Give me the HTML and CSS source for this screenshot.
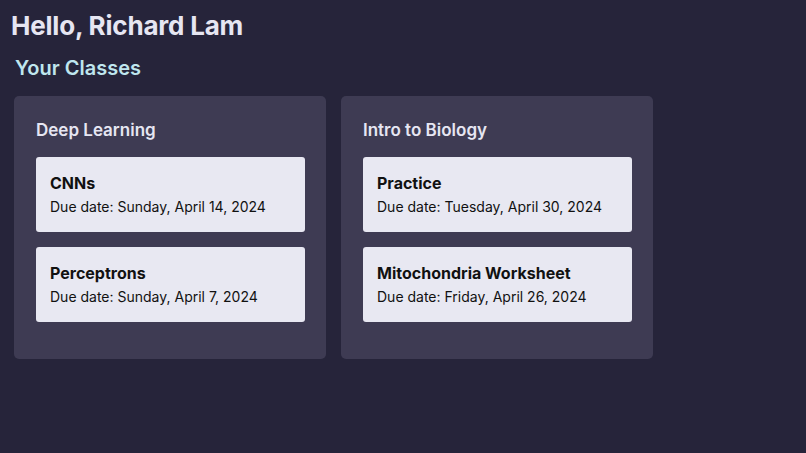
FILE: index.html
```html
<!DOCTYPE html>
<html lang="en">
<head>
  <meta charset="UTF-8">
  <meta name="viewport" content="width=device-width, initial-scale=1.0">
  <title>Dashboard</title>
  <link rel="stylesheet" href="styles.css">
</head>
<body>

<h1 class="greeting">Hello, Richard Lam</h1>
<h2 class="section-title">Your Classes</h2>

<div class="classes">
  <div class="class-card">
    <h3 class="class-name">Deep Learning</h3>
    <div class="assignment">
      <div class="assignment-name">CNNs</div>
      <div class="assignment-due">Due date: Sunday, April 14, 2024</div>
    </div>
    <div class="assignment">
      <div class="assignment-name">Perceptrons</div>
      <div class="assignment-due">Due date: Sunday, April 7, 2024</div>
    </div>
  </div>

  <div class="class-card">
    <h3 class="class-name">Intro to Biology</h3>
    <div class="assignment">
      <div class="assignment-name">Practice</div>
      <div class="assignment-due">Due date: Tuesday, April 30, 2024</div>
    </div>
    <div class="assignment">
      <div class="assignment-name">Mitochondria Worksheet</div>
      <div class="assignment-due">Due date: Friday, April 26, 2024</div>
    </div>
  </div>
</div>

</body>
</html>
```

FILE: styles.css
```css
body {
  font-family: Inter, "Noto Sans", sans-serif;
  background-color: #26243a;
  margin: 0;
  padding: 10px 11px;
  color: #e6e6f2;
}
.greeting {
  font-size: 26px;
  font-weight: 700;
  line-height: 32px;
  margin: 0;
  letter-spacing: -0.2px;
}
.section-title {
  font-size: 20px;
  font-weight: 600;
  line-height: 24px;
  color: #bfe6ee;
  margin: 14px 0 0 4px;
}
.classes {
  display: flex;
  gap: 15px;
  margin: 16px 0 0 3px;
}
.class-card {
  width: 312px;
  box-sizing: border-box;
  background: #3e3b53;
  border-radius: 5px;
  padding: 23px 21px 37px 22px;
  display: flex;
  flex-direction: column;
  gap: 15px;
}
.class-name {
  font-size: 17px;
  font-weight: 600;
  line-height: 22px;
  margin: 0 0 1px 0;
  color: #e6e6f2;
}
.assignment {
  background: #e8e8f2;
  border-radius: 3px;
  height: 75px;
  box-sizing: border-box;
  padding: 16px 14px;
  color: #111;
}
.assignment-name {
  font-size: 16px;
  font-weight: 700;
  line-height: 20px;
}
.assignment-due {
  font-size: 14px;
  line-height: 20px;
  margin-top: 4px;
}
```
